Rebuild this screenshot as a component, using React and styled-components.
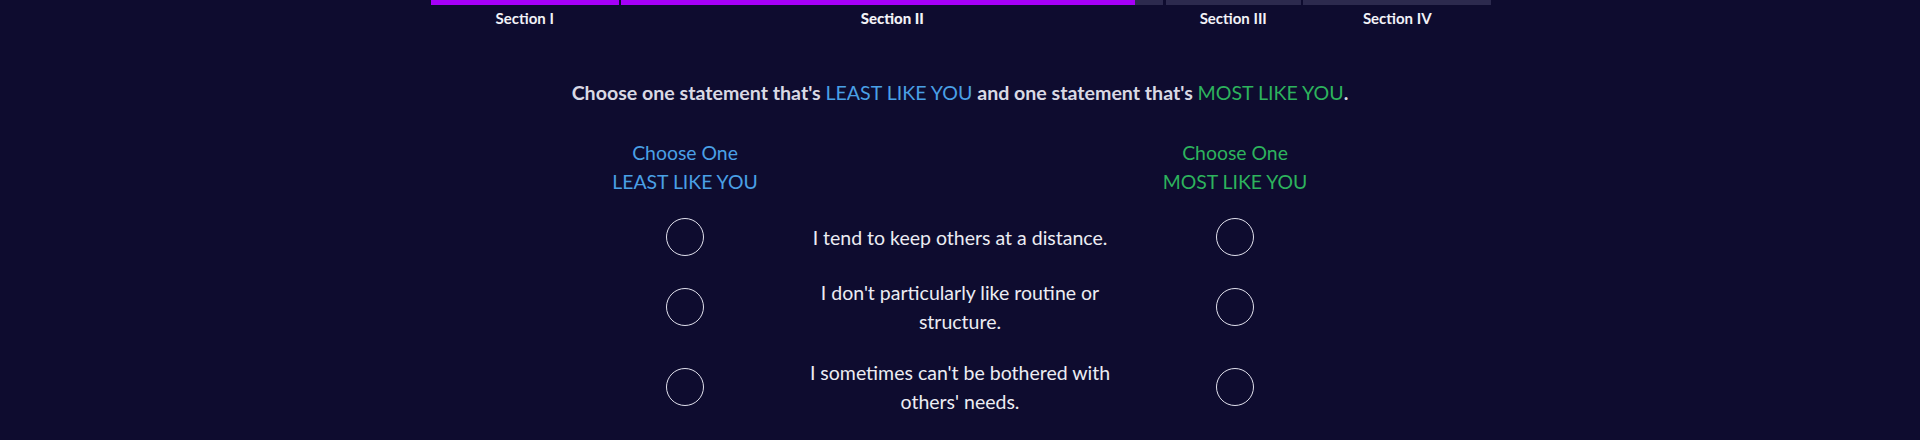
import styled, { createGlobalStyle } from "styled-components";

const GlobalStyle = createGlobalStyle`
  html, body {
    margin: 0;
    padding: 0;
    background: #0e0c2f;
  }
  body {
    font-family: "Lato", "Open Sans", sans-serif;
    color: #e6e6ef;
  }
`

const sections = [
  { label: "Section I", width: 188, progress: 100 },
  { label: "Section II", width: 542, progress: 94.8, current: true },
  { label: "Section III", width: 135, progress: 0 },
  { label: "Section IV", width: 188, progress: 0 },
];

const statements = [
  "I tend to keep others at a distance.",
  "I don't particularly like routine or structure.",
  "I sometimes can't be bothered with others' needs.",
];

const App = () => {
  return (
    <Page>
      <GlobalStyle />
      <Progress>
        {sections.map((s) => (
          <Step key={s.label} $width={s.width}>
            <Track>
              <Fill style={{ width: `${s.progress}%` }} />
            </Track>
            <StepLabel $current={s.current}>{s.label}</StepLabel>
          </Step>
        ))}
      </Progress>

      <Prompt>
        Choose one statement that's <Least>LEAST LIKE YOU</Least> and one statement that's <Most>MOST LIKE YOU</Most>.
      </Prompt>

      <Grid>
        <ColHead $color="#4aa0e6">Choose One<br />LEAST LIKE YOU</ColHead>
        <span />
        <ColHead $color="#2db35d">Choose One<br />MOST LIKE YOU</ColHead>
        {statements.map((text) => (
          <Row key={text}>
            <Cell><Radio aria-label="least" /></Cell>
            <Statement>{text}</Statement>
            <Cell><Radio aria-label="most" /></Cell>
          </Row>
        ))}
      </Grid>
    </Page>
  )
}

const Page = styled.div`
  width: 1920px;
  height: 440px;
  overflow: hidden;
  display: flex;
  flex-direction: column;
  align-items: center;
`
const Progress = styled.div`
  display: flex;
  gap: 2.5px;
  margin-left: 2px;
`
const Step = styled.div`
  width: ${({ $width }) => $width}px;
  display: flex;
  flex-direction: column;
  align-items: center;
`
const Track = styled.div`
  width: 100%;
  height: 5px;
  background: #2c2a4e;
`
const Fill = styled.div`
  height: 100%;
  background: #a600f7;
`
const StepLabel = styled.div`
  margin-top: 4px;
  font-size: 15px;
  line-height: 18px;
  font-weight: ${({ $current }) => ($current ? 900 : 700)};
  color: #f2f2f7;
`
const Prompt = styled.p`
  margin: 52px 0 0;
  font-size: 19.6px;
  line-height: 28px;
  font-weight: 700;
  color: #d9d9e4;
`
const Least = styled.span`
  color: #4aa0e6;
  font-weight: 400;
`
const Most = styled.span`
  color: #2db35d;
  font-weight: 400;
`
const Grid = styled.div`
  margin-top: 31px;
  display: grid;
  grid-template-columns: 200px 350px 200px;
  row-gap: 22px;
  align-items: center;
`
const ColHead = styled.div`
  text-align: center;
  font-size: 19.4px;
  line-height: 29px;
  color: ${({ $color }) => $color};
  margin-bottom: 0;
`
const Row = styled.div`
  display: contents;
`
const Cell = styled.div`
  display: flex;
  justify-content: center;
`
const Statement = styled.div`
  padding: 0 12px;
  text-align: center;
  font-size: 19.5px;
  line-height: 29px;
  color: #ececf3;
`
const Radio = styled.button`
  width: 38px;
  height: 38px;
  border-radius: 50%;
  border: 1.5px solid #e2e2ee;
  background: transparent;
  padding: 0;
  cursor: pointer;
`

export default App
